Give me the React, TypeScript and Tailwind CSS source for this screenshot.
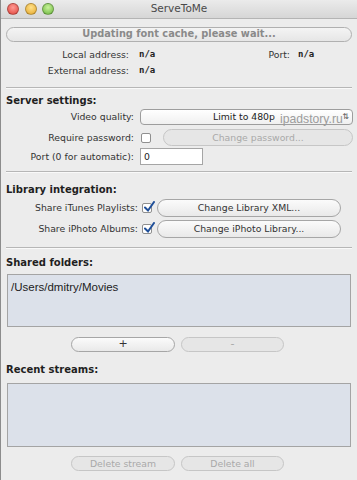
import React from "react";

const ui = { fontFamily: '"DejaVu Sans", "Liberation Sans", sans-serif' };
const mono = { fontFamily: '"DejaVu Sans Mono", "Liberation Mono", monospace' };
const helv = { fontFamily: '"Liberation Sans", Arial, sans-serif' };

function Light({ color }: { color: string }) {
  return (
    <span
      className="block w-[12px] h-[12px] rounded-full border border-black/25"
      style={{ background: color }}
    />
  );
}

function Pill({
  children,
  disabled,
  className = "",
}: {
  children: React.ReactNode;
  disabled?: boolean;
  className?: string;
}) {
  return (
    <div
      className={
        "flex items-center justify-center rounded-full border text-[9.3px] " +
        (disabled
          ? "border-[#c6c6c6] bg-[#e6e6e6] text-[#a9a9a9] "
          : "border-[#a6a6a6] bg-gradient-to-b from-[#fbfbfb] to-[#e9e9e9] text-[#333] ") +
        className
      }
    >
      {children}
    </div>
  );
}

function Check({ checked }: { checked?: boolean }) {
  return (
    <span className="relative block w-[10px] h-[10px] rounded-[2px] border border-[#8f8f8f] bg-white">
      {checked && (
        <svg viewBox="0 0 12 12" className="absolute left-[0px] top-[-3px] w-[12px] h-[12px]">
          <path d="M2 6.5 L5 9.5 L11 1" fill="none" stroke="#1f4f99" strokeWidth="2" strokeLinecap="round" />
        </svg>
      )}
    </span>
  );
}

function Sep() {
  return <div className="mx-[5px] h-[2px] border-t border-[#b6b6b6] border-b border-b-white/70" />;
}

function Heading({ children, mt }: { children: React.ReactNode; mt: string }) {
  return (
    <div className={"px-[5px] h-[14px] flex items-center text-[10px] font-bold text-[#1f1f1f] " + mt}>
      {children}
    </div>
  );
}

export default function App() {
  return (
    <div className="w-[357px] h-[480px] overflow-hidden bg-[#ececec] border-l border-[#8c8c8c] text-[#333]" style={ui}>
      {/* Title bar */}
      <div className="relative h-[19px] flex items-center bg-gradient-to-b from-[#ebebeb] to-[#d6d6d6] border-b border-[#b4b4b4]">
        <div className="flex items-center gap-[5.5px] pl-[6px]">
          <Light color="radial-gradient(circle at 50% 35%, #ff9a94, #e0443b)" />
          <Light color="radial-gradient(circle at 50% 35%, #ffe18a, #e5a72b)" />
          <Light color="radial-gradient(circle at 50% 35%, #c9f39a, #6ab43d)" />
        </div>
        <div className="absolute inset-0 flex items-center justify-center text-[10.5px] text-[#4a4a4a]">
          ServeToMe
        </div>
      </div>

      {/* Progress */}
      <div className="mt-[8px] mx-[5px] h-[15px] rounded-full border border-[#b0b0b0] bg-gradient-to-b from-[#f4f4f4] to-[#e6e6e6] flex items-center justify-center text-[9.8px] font-bold text-[#8a8a8a]">
        Updating font cache, please wait...
      </div>

      {/* Addresses */}
      <div className="mt-[6px] flex h-[14px] items-center text-[9.3px]">
        <div className="w-[128px] text-right">Local address:</div>
        <div className="ml-[10px] w-[120px] text-[9px] font-bold text-[#222]" style={mono}>n/a</div>
        <div className="w-[31px] text-right">Port:</div>
        <div className="ml-[8px] text-[9px] font-bold text-[#222]" style={mono}>n/a</div>
      </div>
      <div className="mt-[2px] flex h-[14px] items-center text-[9.3px]">
        <div className="w-[128px] text-right">External address:</div>
        <div className="ml-[10px] text-[9px] font-bold text-[#222]" style={mono}>n/a</div>
      </div>

      <div className="mt-[9px]">
        <Sep />
      </div>

      {/* Server settings */}
      <Heading mt="mt-[4px]">Server settings:</Heading>
      <div className="mt-[2px] flex h-[16px] items-center text-[9.3px]">
        <div className="w-[133px] text-right">Video quality:</div>
        <div className="relative ml-[6px] w-[213px] h-[16px] rounded-[4px] border border-[#9d9d9d] bg-gradient-to-b from-white to-[#f0f0f0] flex items-center text-[#222]">
          <span className="absolute left-[72px]">Limit to 480p</span>
          <span className="absolute right-[3px] text-[8px] leading-none text-[#555]">⇅</span>
          <span className="absolute left-[139px] top-[0px] text-[12.2px] text-[#9c9c9c]" style={helv}>
            ipadstory.ru
          </span>
        </div>
      </div>
      <div className="mt-[4px] flex h-[17px] items-center text-[9.3px]">
        <div className="w-[133px] text-right">Require password:</div>
        <div className="ml-[7px]">
          <Check />
        </div>
        <Pill disabled className="ml-[12px] w-[190px] h-[17px]">
          Change password...
        </Pill>
      </div>
      <div className="mt-[2px] flex h-[17px] items-center text-[9.3px]">
        <div className="w-[133px] text-right">Port (0 for automatic):</div>
        <div className="ml-[6px] w-[63px] h-[17px] border border-[#a5a5a5] bg-white flex items-center pl-[3px] text-[#222]">0</div>
      </div>

      <div className="mt-[6px]">
        <Sep />
      </div>

      {/* Library integration */}
      <Heading mt="mt-[9px]">Library integration:</Heading>
      <div className="mt-[3px] flex h-[18px] items-center text-[9.3px]">
        <div className="w-[137px] text-right">Share iTunes Playlists:</div>
        <div className="ml-[4px]">
          <Check checked />
        </div>
        <Pill className="ml-[5px] w-[184px] h-[18px]">Change Library XML...</Pill>
      </div>
      <div className="mt-[3px] flex h-[18px] items-center text-[9.3px]">
        <div className="w-[137px] text-right">Share iPhoto Albums:</div>
        <div className="ml-[4px]">
          <Check checked />
        </div>
        <Pill className="ml-[5px] w-[184px] h-[18px]">Change iPhoto Library...</Pill>
      </div>

      <div className="mt-[9px]">
        <Sep />
      </div>

      {/* Shared folders */}
      <Heading mt="mt-[6px]">Shared folders:</Heading>
      <div className="mt-[5px] mx-[6px] h-[53px] border border-[#a4a4a4] bg-[#dce1ea] px-[3px] pt-[4px] text-[11.5px] text-[#222]" style={helv}>
        /Users/dmitry/Movies
      </div>
      <div className="mt-[10px] flex h-[15px] pl-[70px] gap-[6px]">
        <Pill className="w-[104px] h-[15px] text-[11px]">+</Pill>
        <Pill disabled className="w-[103px] h-[15px] text-[11px]">
          -
        </Pill>
      </div>

      {/* Recent streams */}
      <Heading mt="mt-[10px]">Recent streams:</Heading>
      <div className="mt-[7px] mx-[6px] h-[64px] border border-[#a4a4a4] bg-[#dce1ea]" />
      <div className="mt-[9px] flex h-[15px] pl-[70px] gap-[6px]">
        <Pill disabled className="w-[104px] h-[15px]">
          Delete stream
        </Pill>
        <Pill disabled className="w-[103px] h-[15px]">
          Delete all
        </Pill>
      </div>
    </div>
  );
}
